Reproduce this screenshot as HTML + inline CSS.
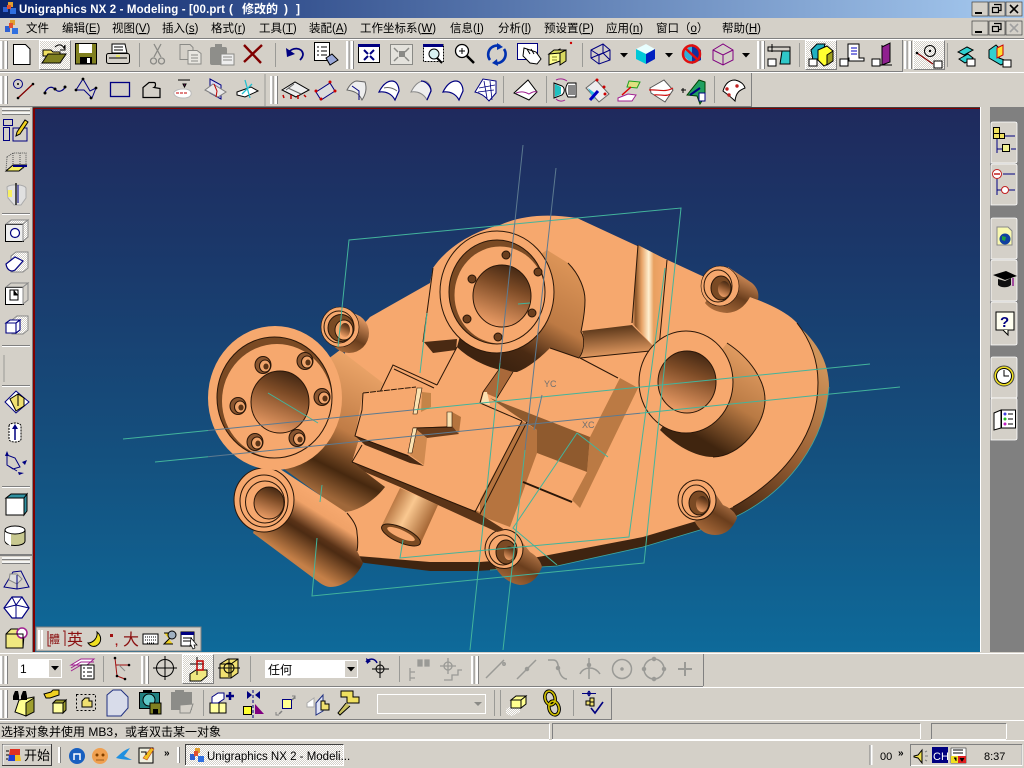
<!DOCTYPE html>
<html><head><meta charset="utf-8"><title>Unigraphics NX 2</title>
<style>
html,body{margin:0;padding:0;background:#d4d0c8;overflow:hidden}
svg{display:block}
text{font-family:"Liberation Sans","WenQuanYi Zen Hei","Noto Sans CJK SC",sans-serif;font-size:12px;fill:#000}
.m text{font-size:11.5px}
.e{fill:#f6a86e}
.o{fill:none;stroke:#2a1608;stroke-width:1}
.g{fill:none;stroke:#43b49c;stroke-width:1}
.b{fill:none;stroke:#5d7a90;stroke-width:1}
</style></head><body>
<svg width="1024" height="768" viewBox="0 0 1024 768" xmlns="http://www.w3.org/2000/svg">
<defs>
<linearGradient id="ti" x1="0" x2="1" y1="0" y2="0"><stop offset="0" stop-color="#0a246a"/><stop offset="1" stop-color="#a6caf0"/></linearGradient>
<linearGradient id="bg" x1="0" x2="0" y1="0" y2="1"><stop offset="0" stop-color="#1f2a5d"/><stop offset=".3" stop-color="#1a3a6c"/><stop offset=".65" stop-color="#14517f"/><stop offset="1" stop-color="#0e6a9a"/></linearGradient>
<pattern id="di" width="2" height="2" patternUnits="userSpaceOnUse"><rect width="2" height="2" fill="#d4d0c8"/><rect width="1" height="1" fill="#fff"/><rect x="1" y="1" width="1" height="1" fill="#fff"/></pattern>
<linearGradient id="hole" x1=".7" y1="0" x2=".35" y2="1"><stop offset="0" stop-color="#3f2512"/><stop offset=".35" stop-color="#7d4b26"/><stop offset="1" stop-color="#f0a068"/></linearGradient>
<linearGradient id="shell" gradientUnits="userSpaceOnUse" x1="830" y1="370" x2="730" y2="520"><stop offset="0" stop-color="#d0945a"/><stop offset=".5" stop-color="#9a6034"/><stop offset="1" stop-color="#3f2410"/></linearGradient>
<linearGradient id="cylA" gradientUnits="userSpaceOnUse" x1="375" y1="370" x2="315" y2="490"><stop offset="0" stop-color="#eba468"/><stop offset=".5" stop-color="#c07c46"/><stop offset=".8" stop-color="#46280f"/><stop offset="1" stop-color="#a0683a"/></linearGradient>
<linearGradient id="cylB" gradientUnits="userSpaceOnUse" x1="320" y1="498" x2="285" y2="554"><stop offset="0" stop-color="#f6a86e"/><stop offset=".2" stop-color="#f0a268"/><stop offset=".5" stop-color="#5a3318"/><stop offset=".58" stop-color="#4c2b13"/><stop offset="1" stop-color="#c58048"/></linearGradient>
<linearGradient id="cylR" gradientUnits="userSpaceOnUse" x1="745" y1="350" x2="685" y2="450"><stop offset="0" stop-color="#e39d62"/><stop offset=".45" stop-color="#b97a44"/><stop offset=".85" stop-color="#40250f"/><stop offset="1" stop-color="#40250f"/></linearGradient>
<linearGradient id="cylT" gradientUnits="userSpaceOnUse" x1="575" y1="265" x2="515" y2="372"><stop offset="0" stop-color="#dd9558"/><stop offset=".5" stop-color="#bd7a44"/><stop offset=".82" stop-color="#4a2a13"/><stop offset="1" stop-color="#3d2310"/></linearGradient>
<linearGradient id="blend" x1="0" x2="1" y1="0" y2="0"><stop offset="0" stop-color="#f6a86e"/><stop offset=".1" stop-color="#8a5428"/><stop offset=".28" stop-color="#e8a468"/><stop offset=".48" stop-color="#fff0d0"/><stop offset=".62" stop-color="#e8a060"/><stop offset="1" stop-color="#f6a86e"/></linearGradient>
<linearGradient id="notch" x1="0" x2=".2" y1="0" y2="1"><stop offset="0" stop-color="#46280f"/><stop offset="1" stop-color="#e59c62"/></linearGradient>
<linearGradient id="stub" gradientUnits="userSpaceOnUse" x1="390" y1="505" x2="428" y2="525"><stop offset="0" stop-color="#b5733f"/><stop offset=".45" stop-color="#fac890"/><stop offset="1" stop-color="#a96a38"/></linearGradient>
<linearGradient id="boss" x1=".8" y1="0" x2=".3" y2="1"><stop offset="0" stop-color="#f6a86e"/><stop offset=".6" stop-color="#6a3e1d"/><stop offset="1" stop-color="#a86a3a"/></linearGradient>
<g id="bolt"><ellipse cx="0" cy="0" rx="8" ry="8.5" fill="#8a5630" stroke="#2a1608"/><ellipse cx="2" cy="1" rx="5.500" ry="6" fill="#f0a56c" stroke="#2a1608"/><ellipse cx="3" cy="1.500" rx="2.600" ry="3" fill="#5b3417"/></g>
<g id="grip"><rect x="0" y="0" width="2.500" height="28" fill="#fff"/><rect x="2.500" y="0" width="1" height="28" fill="#808080"/><rect x="4.500" y="0" width="2.500" height="28" fill="#fff"/><rect x="7" y="0" width="1" height="28" fill="#808080"/></g>
<g id="arw"><path d="M-4 -2h8l-4 4.500z" fill="#000"/></g>
</defs>

<rect width="1024" height="768" fill="#d4d0c8"/>

<!-- title -->
<rect width="1024" height="18" fill="url(#ti)"/>
<g transform="translate(2,2)"><rect x="6" y="0" width="5" height="5" fill="#e0a030"/><rect x="1" y="5" width="5" height="5" fill="#3060d0"/><rect x="8" y="6" width="6" height="6" fill="#3070e0"/><rect x="5" y="3" width="4" height="4" fill="#e05030"/></g>
<text x="19" y="13" textLength="206" lengthAdjust="spacing" style="fill:#fff;font-weight:bold;font-size:11.500px">Unigraphics NX 2 - Modeling - [00.prt</text>
<text x="229" y="13" style="fill:#fff;font-weight:bold;font-size:12px">(</text>
<text x="242" y="13" style="fill:#fff;font-weight:bold;font-size:12px">修改的</text>
<text x="284" y="13" style="fill:#fff;font-weight:bold;font-size:12px">)</text>
<text x="296" y="13" style="fill:#fff;font-weight:bold;font-size:12px">]</text>
<rect x="972" y="2" width="16" height="14" fill="#d4d0c8" stroke="#404040" stroke-width=".7"/><path d="M975 12h7v2h-7z" fill="#000"/>
<rect x="989" y="2" width="16" height="14" fill="#d4d0c8" stroke="#404040" stroke-width=".7"/><path d="M994 4.500h7v6h-2M992.500 7.500h6v5h-6z" fill="none" stroke="#000" stroke-width="1.200"/>
<rect x="1006" y="2" width="16" height="14" fill="#d4d0c8" stroke="#404040" stroke-width=".7"/><path d="M1010 5l8 8M1018 5l-8 8" stroke="#000" stroke-width="1.600"/>
<!-- menu -->
<g transform="translate(4,20)"><rect x="6" y="0" width="5" height="5" fill="#e0a030"/><rect x="1" y="6" width="5" height="6" fill="#3060d0"/><rect x="8" y="8" width="6" height="6" fill="#3070e0"/><rect x="5" y="3" width="4" height="5" fill="#e05030"/></g>
<g class="m">
<text x="26" y="32">文件</text><text x="62" y="32">编辑(<tspan text-decoration="underline">E</tspan>)</text><text x="112" y="32">视图(<tspan text-decoration="underline">V</tspan>)</text><text x="162" y="32">插入(<tspan text-decoration="underline">s</tspan>)</text><text x="211" y="32">格式(<tspan text-decoration="underline">r</tspan>)</text><text x="259" y="32">工具(<tspan text-decoration="underline">T</tspan>)</text><text x="309" y="32">装配(<tspan text-decoration="underline">A</tspan>)</text><text x="360" y="32">工作坐标系(<tspan text-decoration="underline">W</tspan>)</text><text x="450" y="32">信息(<tspan text-decoration="underline">I</tspan>)</text><text x="498" y="32">分析(<tspan text-decoration="underline">l</tspan>)</text><text x="544" y="32">预设置(<tspan text-decoration="underline">P</tspan>)</text><text x="606" y="32">应用(<tspan text-decoration="underline">n</tspan>)</text><text x="656" y="32">窗口（<tspan text-decoration="underline">o</tspan>）</text><text x="722" y="32">帮助(<tspan text-decoration="underline">H</tspan>)</text>
</g>
<rect x="972" y="21" width="16" height="14" fill="#d4d0c8" stroke="#404040" stroke-width=".7"/><path d="M975 31h7v2h-7z"/>
<rect x="989" y="21" width="16" height="14" fill="#d4d0c8" stroke="#404040" stroke-width=".7"/><path d="M994 23.500h7v6h-2M992.500 26.500h6v5h-6z" fill="none" stroke="#000" stroke-width="1.200"/>
<rect x="1006" y="21" width="16" height="14" fill="#d4d0c8" stroke="#404040" stroke-width=".7"/><path d="M1010 24l8 8M1018 24l-8 8" stroke="#a0a0a0" stroke-width="1.600"/>

<!-- row lines -->
<path d="M0 38.500H1024" stroke="#808080"/><path d="M0 39.500H1024" stroke="#fff"/>
<path d="M0 71.500H903" stroke="#808080"/><path d="M0 72.500H1024" stroke="#fff"/>
<path d="M902.500 40V71" stroke="#808080"/>
<path d="M0 106.500H751" stroke="#808080"/>
<path d="M751.500 73V107" stroke="#808080"/>

<use href="#grip" x="0" y="41"/><use href="#grip" x="346" y="41"/><use href="#grip" x="757" y="41"/><use href="#grip" x="904" y="41"/>
<use href="#grip" x="0" y="76"/><use href="#grip" x="270" y="76"/>
<path d="M139.500 43V67M275.500 43V67M582.500 43V67M799.500 43V67M947.500 43V67M265 74V106M546.500 76V103M503.500 76V103M714.500 76V103" stroke="#9a9a96" stroke-width="1"/>

<g stroke="#fff"><rect x="39.500" y="40.500" width="31" height="29" fill="url(#di)"/><rect x="805.500" y="40.500" width="31" height="29" fill="url(#di)"/><rect x="913.500" y="40.500" width="31" height="29" fill="url(#di)"/></g>
<path d="M39.500 69.500H70.500V40.500M805.500 69.500H836.500V40.500M913.500 69.500H944.500V40.500" stroke="#808080" fill="none"/>

<!-- row 1 icons -->
<path d="M13.500 44.500h12l4.500 4.500v15.500H13.500z" fill="#fff" stroke="#000"/>
<path d="M43 50h8l2 2h7v4H43z" fill="#f0e060" stroke="#000"/><path d="M42 63l6-9h18l-6 9z" fill="#808020" stroke="#000"/><path d="M55 47c3-3 7-3 9 1l1-3v5h-5" fill="none" stroke="#000"/>
<rect x="75.500" y="43.500" width="21" height="20.500" fill="#808020" stroke="#000"/><rect x="79" y="44" width="13" height="9" fill="#fff"/><rect x="80" y="57" width="12" height="7" fill="#000"/><rect x="87" y="58" width="3" height="5" fill="#fff"/>
<path d="M112 44h13l2 9h-15z" fill="#fff" stroke="#000"/><path d="M114 47h9M114 50h9" stroke="#000"/><rect x="106.500" y="53.500" width="23" height="10" rx="2" fill="#d4d0c8" stroke="#000"/><path d="M109 58h18" stroke="#000"/><path d="M116 56h4" stroke="#ff0"/>
<g fill="none" stroke="#8a8a86" stroke-width="1.300"><path d="M154 44l7 13M161 44l-7 13"/><circle cx="153.500" cy="61" r="3"/><circle cx="161.500" cy="61" r="3"/></g>
<g stroke="#8a8a86" fill="#d4d0c8"><path d="M180 44.500h10l3 3v12h-13z"/><path d="M188 50.500h9l4 3v10.500h-13z" fill="#e8e6e0"/><path d="M191 55h7M191 58h7M191 61h7"/></g>
<rect x="210" y="47" width="17" height="18" rx="2" fill="#8e8e8a"/><rect x="215" y="44" width="7" height="5" fill="#8e8e8a"/><rect x="221" y="54" width="13" height="11" fill="#eee" stroke="#8a8a86"/><path d="M223 57h9M223 60h9" stroke="#8a8a86"/>
<path d="M244 45l17 18M262 45l-18 17" stroke="#800000" stroke-width="2.400" fill="none"/>
<path d="M288 53c4-6 14-6 15 1 0 3-2 5-3 6" fill="none" stroke="#000080" stroke-width="1.800"/><path d="M286 48l1 9 8-3z" fill="#000080"/>
<rect x="314.500" y="42.500" width="15" height="18" fill="#fff" stroke="#000"/><path d="M317 47h2M321 47h6M317 51h2M321 51h6M317 55h2M321 55h6" stroke="#000"/><path d="M326 58l6-4 6 6-8 5z" fill="#9aa8d8" stroke="#000"/>
<rect x="358.500" y="44.500" width="21" height="18" fill="#fff" stroke="#000"/><rect x="358" y="44" width="22" height="3" fill="#000080"/><path d="M364 50l4 4M374 50l-4 4M364 60l4-4M374 60l-4-4" stroke="#000080" stroke-width="2"/>
<rect x="390.500" y="44.500" width="22" height="20" fill="#e4e2dc" stroke="#8a8a86"/><path d="M394 48l4 4M409 48l-4 4M394 61l4-4M409 61l-4-4" stroke="#8a8a86" stroke-width="1.500"/><rect x="399" y="51" width="6" height="6" fill="#8a8a86"/>
<rect x="423.500" y="44.500" width="20" height="17" fill="#fff" stroke="#000" stroke-dasharray="2 1"/><rect x="423" y="44" width="20" height="3" fill="#000080"/><circle cx="434" cy="54" r="5" fill="#d8f0f0" stroke="#000"/><path d="M437 58l5 5" stroke="#000" stroke-width="2"/>
<circle cx="462" cy="51" r="6.500" fill="#fff" stroke="#000" stroke-width="1.300"/><path d="M459 51h6M462 48v6" stroke="#000"/><path d="M467 56l7 7" stroke="#000" stroke-width="2.500"/>
<path d="M490 60a9 9 0 0 1 10-14M504 49a9 9 0 0 1-9 14" fill="none" stroke="#0030b0" stroke-width="2.600"/><path d="M497 43l6 4-6 3zM498 66l-6-3 5-4z" fill="#0030b0"/>
<rect x="517.500" y="43.500" width="20" height="16" fill="#fff" stroke="#000080"/><path d="M524 48l12 4 5 7-4 5-7-1-7-7z" fill="#fff" stroke="#000"/><path d="M527 49l3 5M531 49l3 5" stroke="#000"/>
<path d="M549 54l11-5v12l-11 4z" fill="#ffff90" stroke="#000"/><path d="M549 54l5-4h12l-6 3zM560 53l6-3v11l-6 4z" fill="#d8d860" stroke="#000"/><path d="M552 57h5M552 60h5" stroke="#808020"/><circle cx="571" cy="43" r="1.200" fill="#c00"/>
<g fill="none" stroke="#000080" stroke-width="1"><path d="M591 50l12-6 7 6v10l-11 4-8-6z"/><path d="M591 50l8 5 11-5M599 55v9M603 44v9l-12 5M603 53l7 7"/></g><use href="#arw" x="624" y="55"/>
<path d="M636 49l10-5 9 5-9 5z" fill="#e8ffff"/><path d="M636 49l10 5v10l-10-5z" fill="#00c8d8"/><path d="M646 54l9-5v10l-9 5z" fill="#0020c0"/><use href="#arw" x="669" y="55"/>
<path d="M682 54l10-10 9 6v10l-9 4z" fill="#30b0d8"/><path d="M692 44v20l9-4v-10z" fill="#1030a0"/><circle cx="691.500" cy="54" r="8.500" fill="none" stroke="#e01010" stroke-width="2.500"/><path d="M685 48l13 12" stroke="#e01010" stroke-width="2.500"/>
<g fill="none" stroke="#800080" stroke-width="1"><path d="M713 50l10-6 10 6v10l-10 5-10-5z"/><path d="M713 50l10 5 10-5M723 55v10"/></g><use href="#arw" x="746" y="55"/>
<path d="M782 51h8v13h-10z" fill="#30c8c8" stroke="#000"/><path d="M768 47h22v4h-22zM772 44v8" fill="#d4d0c8" stroke="#000"/><rect x="768" y="59" width="8" height="7" fill="#fff" stroke="#000"/>
<path d="M811 50l6-6h8l-4 16h-8z" fill="#20b0c0" stroke="#000"/><path d="M818 50l9-4 6 5v10l-9 5-6-6z" fill="#ffff30" stroke="#000"/><path d="M827 55l6-4v10l-6 4z" fill="#a0a020" stroke="#000"/><rect x="809" y="59" width="8" height="7" fill="#fff" stroke="#000"/>
<path d="M848 44h11v14h5v3h-15v-3h-1z" fill="#fff" stroke="#000"/><path d="M851 48h6M851 51h6M851 54h6" stroke="#0000c0"/><rect x="840" y="59" width="8" height="7" fill="#fff" stroke="#000"/>
<path d="M882 47l8-4v19l-8 3z" fill="#902090" stroke="#000"/><path d="M882 45v15M877 65h15" stroke="#000"/><rect x="872" y="59" width="8" height="7" fill="#fff" stroke="#000"/>
<circle cx="930" cy="51" r="5.500" fill="none" stroke="#000"/><circle cx="930" cy="51" r="1.200"/><path d="M917 53l16 11" stroke="#800000" stroke-width="1.200"/><circle cx="917" cy="53" r="1.300"/><rect x="934" y="61" width="8" height="7" fill="#fff" stroke="#000"/>
<path d="M958 52l9-5 6 3-9 5zM959 59l9-5 5 4-8 5z" fill="#30d0d0" stroke="#000"/><rect x="967" y="59" width="8" height="7" fill="#fff" stroke="#000"/>
<path d="M989 50l7-5 3 3v10l8 3-6 4-12-7z" fill="#30d0d0" stroke="#000"/><path d="M997 48l6-3v10l-6 3z" fill="#ffe030" stroke="#c00"/><rect x="1003" y="60" width="8" height="7" fill="#fff" stroke="#000"/>

<!-- row 2 icons -->
<circle cx="18" cy="84" r="4.500" fill="none" stroke="#000080"/><circle cx="18" cy="84" r="1"/><path d="M18 98l15-14" stroke="#800000" stroke-width="1.300"/><circle cx="18" cy="98" r="1.300"/><circle cx="33" cy="84" r="1.300"/>
<path d="M45 92c4-7 8-5 11-2s8 0 9-3" fill="none" stroke="#000080" stroke-width="1.200"/><circle cx="45" cy="93" r="1.500"/><circle cx="55" cy="89" r="1.500"/><circle cx="65" cy="87" r="1.500"/>
<path d="M76 90l7-11 7 12 6-3M76 90l8 0 8 8 4-10" fill="none" stroke="#000080"/><circle cx="76" cy="90" r="1.400"/><circle cx="83" cy="79" r="1.400"/><circle cx="91" cy="98" r="1.400"/><circle cx="96" cy="88" r="1.400"/>
<rect x="110.500" y="82.500" width="19" height="14" fill="none" stroke="#000080" stroke-width="1.300"/>
<path d="M143 97.500v-10l6-5h5c2 0 2 4 0 5l6 1v9z" fill="none" stroke="#000" stroke-width="1.200"/>
<path d="M178 80h12M183 84h3l-1.500 3z" stroke="#000" fill="#a02080"/><path d="M174 92c4-4 15-4 17 0 1 4-2 6-8 6s-10-3-9-6z" fill="#fff" stroke="#bbb"/><path d="M176 93h12" stroke="#c00000" stroke-dasharray="3 1"/>
<path d="M210 79l11 6v14l-11-6z" fill="#d8d8f0" stroke="#000080"/><path d="M205 90l8-6 13 8-8 5z" fill="#e8e8e8" stroke="#808080"/><path d="M214 84l3 7-1 6" stroke="#c00000" fill="none"/>
<path d="M237 92l14-5 7 4-13 6-8-2z" fill="#fff" stroke="#000"/><path d="M245 80l5 18M252 84l-10 10" stroke="#20c0d0" stroke-width="1.300"/>

<path d="M282 90l13-8 14 8-13 7z" fill="#eee" stroke="#000"/><path d="M288 88l13 6M294 84l-8 6" stroke="#666"/><path d="M284 98l-1-3M291 99v-4M298 99v-4M304 95l2 2" stroke="#c00000" stroke-width="1.500"/>
<path d="M316 92l14-9 5 8-14 9z" fill="#ddd" stroke="#000080"/><circle cx="316" cy="91" r="1.500" fill="#c00"/><circle cx="330" cy="82" r="1.500" fill="#c00"/><circle cx="335" cy="91" r="1.500" fill="#c00"/><circle cx="321" cy="99" r="1.500" fill="#c00"/>
<path d="M347 90c3-6 7-9 10-9l8 1c2 6 1 12-3 18-3-7-8-9-15-10z" fill="#eee" stroke="#666"/><path d="M352 86l7 5 0 9" stroke="#000080" fill="none"/>
<path d="M379 92c3-6 7-11 13-11 5 0 7 6 7 10l-4 9c-3-6-9-9-16-8z" fill="#fff" stroke="#000080" stroke-width="1.200"/><path d="M384 88c4-1 9 0 13 3" stroke="#666" fill="none"/>
<path d="M411 92c3-6 7-11 13-11 5 0 7 6 7 10l-4 9c-3-6-9-9-16-8z" fill="#eee" stroke="#888"/><path d="M421 81c5 0 10 5 10 10l-4 9" fill="none" stroke="#000080" stroke-width="1.300"/>
<path d="M443 92c3-6 7-11 13-11 5 0 7 6 7 10l-4 9c-3-6-9-9-16-8z" fill="#fff" stroke="#000080" stroke-width="1.200"/>
<path d="M475 92l8-13 13 2 0 12-7 8c-4-5-9-8-14-9z" fill="#fff" stroke="#000080"/><path d="M479 88l16-3M478 92l16-2M484 81l3 17M490 81l2 19" stroke="#000080" stroke-width=".8"/>
<path d="M514 93l14-13 9 12-8 8z" fill="#fff" stroke="#000"/><path d="M516 93c6-2 9-1 13 1 3-2 6-3 8-2" fill="none" stroke="#a02090"/>
<path d="M554 83l8 3c3 2 3 6 0 9l-8 3zM576 83h-8c-3 4-3 9 0 14h8z" fill="#fff" stroke="#000"/><path d="M555 84l6 3v7l-6 3z" fill="#20c0c0"/><path d="M568 85h8v10h-8z" fill="#888"/><path d="M556 80c4-2 8-1 11 1M565 100c-3 2-7 1-9-1" stroke="#a02090" fill="none"/>
<path d="M586 88l10-8 13 14-10 8z" fill="#eee" stroke="#666"/><path d="M588 88l8 6-2 6z" fill="#30c0e0"/><path d="M590 100l8-9" stroke="#0000c0" stroke-width="3"/><circle cx="597" cy="80" r="1.500" fill="#c00"/><circle cx="604" cy="87" r="1.500" fill="#c00"/><circle cx="605" cy="94" r="1.500" fill="#c00"/>
<path d="M618 98l10-4 8 1-4 6-14 0z" fill="#fff" stroke="#a02090"/><path d="M629 81l11 1-3 6-10-1z" fill="#e0e080" stroke="#20a020"/><path d="M622 95l9-8" stroke="#e00000" stroke-width="1.500"/>
<path d="M650 88l14-8 9 10-8 12-14-9z" fill="#fff" stroke="#555"/><path d="M649 90c8-1 16 3 24-2M654 95c5-1 13 2 16-1" stroke="#d01010" fill="none" stroke-width="1.200"/>
<path d="M681 90h5M683 88v5" stroke="#000"/><path d="M687 95l12-15 6 2v14l-5 8-3-8z" fill="#20a060" stroke="#004000"/><path d="M690 95l10-7" stroke="#000080" stroke-width="2"/><rect x="699" y="93" width="6" height="8" fill="#fff" stroke="#000080"/>
<path d="M723 91c2-7 6-11 12-11 5 1 9 4 10 8-5 2-9 4-10 13-4-4-8-7-12-10z" fill="#fff" stroke="#000"/><circle cx="727" cy="89" r="1.700" fill="#c02020"/><circle cx="737" cy="86" r="1.700" fill="#c02020"/><circle cx="729" cy="95" r="1.700" fill="#c02020"/>

<!-- viewport -->
<rect x="33" y="107" width="957" height="547" fill="#800000"/>
<rect x="35" y="109" width="945" height="543" fill="url(#bg)"/>
<rect x="33" y="107" width="957" height="1" fill="#404040"/>

<!-- MODEL -->
<path d="M357 556Q358 562 365 563L430 571L477 571L557 566L643 547L700 530L737 516C790 490 825 440 829 387C829 360 815 335 783 315L750 297L700 400Z" fill="url(#shell)"/>
<path d="M829 387C825 440 790 490 737 516L700 530L643 547L557 566L490 570" fill="none" stroke="#3fa8a0" stroke-width=".8"/>
<path class="e" d="M370 317L430 283L433 268C445 250 470 232 500 225C520 216 545 213 577 218L700 275L750 297C775 306 790 315 797 323C812 342 818 362 818 383C818 430 790 475 733 507L700 520L643 537L533 558L480 562L430 562L357 556L357 533L345 510L385 487L345 460L345 345Z"/>
<path d="M797 323C812 342 818 362 818 383C818 430 790 475 733 507" class="o"/>
<!-- big left cylinder -->
<path d="M340 350L383 383L360 436L352 462L385 487C375 500 358 512 343 512L280 466L300 380Z" fill="url(#cylA)"/>
<!-- lower-left tube -->
<path d="M277 467L347 513C353 520 357 526 357 533C358 540 358 546 357 551L363 563C358 575 345 587 330 587C327 587 323 585 320 583L253 533Z" fill="url(#cylB)"/>
<path d="M347 513C353 520 357 526 357 533C358 540 358 546 357 551" class="o"/>
<ellipse cx="264" cy="500" rx="30" ry="32" class="e"/>
<ellipse cx="264" cy="500" rx="30" ry="32" class="o"/>
<ellipse cx="264" cy="501" rx="24" ry="26" class="o"/>
<ellipse cx="265" cy="502" rx="19.500" ry="21" class="o"/>
<ellipse cx="269" cy="503" rx="15" ry="16" fill="url(#hole)" stroke="#2a1608"/>

<!-- top boss side -->
<path d="M547 250L568 263C580 275 585 290 585 300C585 315 582 325 581 332C585 338 585 350 579 358L550 348C540 358 528 368 517 372C495 372 470 360 457 347L470 300Z" fill="url(#cylT)"/>
<path d="M568 263C580 275 585 290 585 300C585 315 582 325 581 332C585 338 585 350 579 358L550 348" class="o"/>
<path d="M582 331L632 325L657 350L580 358C585 350 585 338 582 331Z" fill="url(#notch)"/>
<path d="M580 358L660 350" class="o"/>
<path d="M638 245L667 260L657 350L632 323Z" fill="url(#blend)"/>
<path d="M638 245L632 323M667 260L659 348" class="o"/>
<path d="M433 268L423 342" class="o"/>
<path d="M424 342L457 339L456 350L433 353Z" fill="#4a2a13"/>
<path d="M457 347L437 385" class="o"/>
<!-- top boss face -->
<ellipse cx="497" cy="292" rx="57" ry="61" class="e"/>
<ellipse cx="497" cy="292" rx="57" ry="61" class="o"/>
<ellipse cx="497" cy="292" rx="48" ry="52" fill="#7a4a24"/>
<ellipse cx="500" cy="295" rx="45.500" ry="48.500" class="e"/>
<ellipse cx="497" cy="292" rx="48" ry="52" class="o"/>
<ellipse cx="502" cy="296" rx="29" ry="31" fill="url(#hole)" stroke="#2a1608"/>
<g fill="#6b3f1e" stroke="#2a1608"><circle cx="506" cy="255" r="4"/><circle cx="472" cy="279" r="4"/><circle cx="467" cy="319" r="4"/><circle cx="498" cy="337" r="4"/><circle cx="538" cy="272" r="4"/><circle cx="532" cy="313" r="4"/></g>

<!-- left boss -->
<ellipse cx="275" cy="398" rx="67" ry="72" class="e"/>
<ellipse cx="274.500" cy="397.500" rx="57.500" ry="60.500" fill="#7a4a24"/>
<ellipse cx="277" cy="401" rx="55" ry="57" class="e"/>
<ellipse cx="274.500" cy="397.500" rx="57.500" ry="60.500" class="o"/>
<ellipse cx="280" cy="402" rx="29" ry="31" fill="url(#hole)" stroke="#2a1608"/>
<use href="#bolt" x="263" y="365"/><use href="#bolt" x="305" y="361"/><use href="#bolt" x="322" y="397"/><use href="#bolt" x="297" y="438"/><use href="#bolt" x="255" y="442"/><use href="#bolt" x="238" y="406"/>

<!-- right boss -->
<path d="M727 343C750 358 765 380 765 400C765 425 740 457 713 457C695 457 675 445 660 430Z" fill="url(#cylR)"/>
<path d="M727 343C750 358 765 380 765 400C765 425 740 457 713 457" class="o"/>
<ellipse cx="686" cy="382" rx="47" ry="51" class="e"/>
<ellipse cx="686" cy="382" rx="47" ry="51" class="o"/>
<ellipse cx="687" cy="382" rx="29" ry="31" fill="url(#hole)" stroke="#2a1608"/>

<!-- small bosses -->
<ellipse cx="349" cy="333" rx="20" ry="20" fill="url(#boss)"/>
<ellipse cx="340" cy="327" rx="19" ry="20" class="e"/><ellipse cx="340" cy="327" rx="19" ry="20" class="o" style="stroke-width:.6"/><ellipse cx="339" cy="327" rx="15" ry="16" class="o"/><ellipse cx="341" cy="328" rx="13" ry="13.500" fill="#7a4a24" stroke="#2a1608"/><ellipse cx="344" cy="330" rx="9" ry="10" class="e" stroke="#2a1608"/><ellipse cx="345" cy="330" rx="5" ry="7" fill="url(#hole)"/>
<path d="M728 267L752 283Q760 290 758 300L750 297Q742 312 727 313Q712 312 705 303Z" fill="url(#boss)"/>
<ellipse cx="720" cy="286" rx="19" ry="20" class="e"/><ellipse cx="720" cy="286" rx="19" ry="20" class="o" style="stroke-width:.6"/><ellipse cx="718" cy="286" rx="14" ry="16" class="o"/><ellipse cx="721" cy="288" rx="10" ry="12" fill="#7a4a24" stroke="#2a1608"/><ellipse cx="724" cy="289" rx="6" ry="8" fill="url(#hole)"/>
<path d="M708 483L723 505Q735 510 737 518Q730 535 715 535Q702 535 695 522Z" fill="url(#boss)"/>
<ellipse cx="697" cy="500" rx="19" ry="20" class="e"/><ellipse cx="697" cy="500" rx="19" ry="20" class="o"/><ellipse cx="696" cy="501" rx="14" ry="16" class="o"/><ellipse cx="699" cy="503" rx="10" ry="12" fill="#7a4a24" stroke="#2a1608"/><ellipse cx="702" cy="504" rx="6" ry="8" fill="url(#hole)"/>
<path d="M515 533L530 552Q540 558 542 567Q535 585 520 585Q505 583 495 567Z" fill="url(#boss)"/>
<ellipse cx="504" cy="549" rx="19" ry="19.500" class="e"/><ellipse cx="504" cy="549" rx="19" ry="19.500" class="o"/><ellipse cx="503" cy="550" rx="14" ry="15" class="o"/><ellipse cx="506" cy="552" rx="10" ry="12" fill="#7a4a24" stroke="#2a1608"/><ellipse cx="509" cy="553" rx="5" ry="7" fill="url(#hole)"/>

<!-- pocket -->
<path d="M620 378L638 388L580 508L572 500L587 472L590 437Z" fill="#bb7a44"/>
<path d="M490 398L590 437L587 472L537 453L537 430Z" fill="#8f5a2e"/>
<path d="M537 430L537 453L510 527L473 513L522 421Z" fill="#b6743f"/>
<path d="M500 368L513 372L497 398L483 392Z" fill="#a9693a"/>
<path d="M523 482L572 502" stroke="#2a1608" stroke-width="2"/>
<path d="M580 358L618 378" class="o"/>
<path d="M513 372L497 398M500 368L483 392" class="o" style="stroke-width:.8"/>

<!-- plate -->
<path d="M360 436L420 440L480 403L480 512L352 462Z" class="e"/>
<path d="M352 462L475 511L505 530L497 532L438 505L400 487L365 472Z" fill="#5a3418"/>
<path d="M352 462L362 445" class="o"/><path d="M352 462L476 512" class="o"/>
<path d="M522 421L475 512M527 422L480 514" class="o"/>
<path d="M483 392L480 403L522 421" class="o"/>
<path d="M484 392L481 403L490 405L487 392Z" fill="#fbe0b0"/>
<!-- stub -->
<path d="M400 488L438 505L420 545L382 525Z" fill="url(#stub)"/>
<ellipse cx="401" cy="535" rx="21" ry="7.500" transform="rotate(24 401 535)" fill="#7a4a22" stroke="#2a1608"/>
<ellipse cx="401" cy="534" rx="15" ry="4" transform="rotate(24 401 534)" class="e"/>
<!-- block -->
<path d="M380 392L393 365L437 385M394 369L434 388" class="o"/>
<path d="M363 393L422 387L415 413L447 413L452 427L413 428L408 453L355 436Z" class="e"/>
<path d="M422 392L431 393L431 407L421 412Z" fill="#c58448"/>
<path d="M452 412L461 417L459 433L452 427Z" fill="#b5743e"/>
<path d="M413 428L452 426L459 434L427 438Z" fill="#6a3d1c"/>
<path d="M417 430L427 438L424 465L410 455Z" fill="#d08a50"/>
<path d="M355 436L408 455L424 466L410 463L365 445Z" fill="#4a2a13"/>
<path d="M363 393L416 387" stroke="#2a1608" stroke-dasharray="6 1"/>
<path d="M363 393L362 410L355 436L408 456M413 428L452 427" class="o"/>
<path d="M417 388L422 388L417 414L413 414Z" fill="#fce2b0" stroke="#2a1608" stroke-width=".6"/>
<path d="M447 412L452 412L452 427L447 427Z" fill="#fce2b0" stroke="#2a1608" stroke-width=".6"/>
<path d="M413 428L417 428L412 453L408 453Z" fill="#fce2b0" stroke="#2a1608" stroke-width=".6"/>

<!-- WCS lines -->
<g class="g">
<path d="M338 347L349 240L681 208L644 563L312 596L317 538M322 485L320 502"/>
<path d="M403 540L400 558L629 537L665 268M427 313L420 373"/>
<path d="M123 439L208 430.500M415 409.700L870 364M155 462L208 456.700M640 413.200L900 387"/>
<path d="M500 363L470 650M525 450L503 650"/>
<path d="M268 393L318 423M518 304L530 303"/>
<path d="M577 433L513 528L557 565M577 433L608 457"/>
</g>
<g class="b">
<path d="M208 430.500L415 409.700M208 456.700L640 413.200"/>
<path d="M523 145L500 363M556 168L525 450"/>
<path d="M534 430L542 395"/>
</g>
<text x="544" y="387" style="font-size:9px;fill:#707070">YC</text>
<text x="582" y="428" style="font-size:9px;fill:#707070">XC</text>

<!-- language bar -->
<rect x="36" y="627" width="165" height="24" fill="#d4d0c8" stroke="#808080"/>
<path d="M39 630v19M42 630v19" stroke="#fff" stroke-width="2"/>
<text x="49" y="643" style="font-size:11px;fill:#8a1010">體</text><path d="M48 631v15h3M63 631h2v15" fill="none" stroke="#8a1010"/>
<text x="67" y="645" style="font-size:16px;fill:#8a1010">英</text>
<text x="123" y="645" style="font-size:16px;fill:#8a1010">大</text>
<path d="M88 643c5 0 10-5 9-11 5 4 5 11-1 14-3 1-6 0-8-3z" fill="#f0e020" stroke="#000"/>
<rect x="110" y="634" width="3" height="3" fill="#a01010"/><text x="115" y="645" style="font-size:11px;fill:#a01010;font-weight:bold">,</text>
<rect x="143" y="634" width="15" height="10" fill="#fff" stroke="#000"/><path d="M145 637h11M145 640h11M147 643h7" stroke="#000" stroke-dasharray="1 1"/>
<path d="M164 633h6v5l-6 6h9" fill="#f0d020" stroke="#000"/><circle cx="172" cy="635" r="4" fill="#a0b0c0" stroke="#000"/>
<rect x="181" y="632" width="13" height="14" fill="#fff" stroke="#000"/><rect x="181" y="632" width="13" height="3" fill="#000080"/><path d="M183 638h9M183 641h9" stroke="#000"/><path d="M191 638l6 7h-3l1 3-2 1-2-4-1 1z" fill="#fff" stroke="#000" stroke-width=".7"/>

<!-- left toolbar -->
<rect x="0" y="107" width="33" height="547" fill="#d4d0c8"/>
<path d="M32.500 107V653" stroke="#808080"/>
<path d="M2 109h28M2 113h28" stroke="#fff" stroke-width="1.500"/><path d="M2 110.500h28M2 114.500h28" stroke="#808080"/>
<path d="M2 213.500h28M2 345.500h28M2 385.500h28M2 486.500h28" stroke="#808080"/>
<path d="M2 214.500h28M2 346.500h28M2 386.500h28M2 487.500h28" stroke="#fff"/>
<path d="M0 554.500h33M0 555.500h33" stroke="#808080"/><path d="M2 558h28M2 562h28" stroke="#fff" stroke-width="1.500"/><path d="M2 559.500h28M2 563.500h28" stroke="#808080"/>
<path d="M4 355V382" stroke="#9a9a96"/>
<rect x="3.500" y="119.500" width="9" height="6" fill="none" stroke="#000080"/><rect x="3.500" y="127.500" width="6" height="13" fill="none" stroke="#000080"/><path d="M13 128h14v13H13z" fill="none" stroke="#000080"/><path d="M17 132l8-12 3 2-8 12-4 2z" fill="#f0d020" stroke="#000"/>
<g transform="translate(0,152)"><path d="M7 5l6-4h13v13l-7 5H6z" fill="none" stroke="#555" stroke-dasharray="1 1"/><path d="M6 19l7-6h13l-7 6z" fill="#f8f060" stroke="#000"/><path d="M13 1v12M20 1v13" stroke="#555" stroke-dasharray="1 1"/><path d="M13 14h14" stroke="#000080" stroke-width="2"/></g>
<path d="M7 187c3-3 17-3 19 1v10l-5 7h-7l-6-7z" fill="#e0e0e0" stroke="#aaa"/><path d="M8 190l4 0v7H8z" fill="#f8f060"/><path d="M16 183v22" stroke="#000" stroke-width="1.300"/><path d="M18 185v18" stroke="#000080"/>
<rect x="5.500" y="224.500" width="18" height="17" fill="#eee" stroke="#000"/><path d="M6 224l5-4h17l-5 4zM23 224l5-4v17l-5 4z" fill="url(#di)" stroke="#888"/><circle cx="15" cy="233" r="4.500" fill="#fff" stroke="#000080" stroke-width="1.200"/>
<path d="M11 256l5-4h12v16l-5 4H11z" fill="url(#di)" stroke="#888"/><path d="M6 264l9-7 8 4-8 9c-3 2-8 1-9-6z" fill="#fff" stroke="#000080" stroke-width="1.200"/>
<rect x="5.500" y="287.500" width="18" height="17" fill="#fff" stroke="#000"/><path d="M6 287l5-4h17l-5 4zM23 287l5-4v17l-5 4z" fill="#d4d0c8" stroke="#888"/><rect x="10" y="290" width="8" height="10" fill="none" stroke="#000"/><path d="M14 290v5h4" stroke="#000"/>
<path d="M12 320l5-4h11v14l-5 4H12z" fill="url(#di)" stroke="#888"/><path d="M6 323h10v10H6zM6 323l4-3h10l-4 3zM16 323l4-3v10l-4 3z" fill="#fff" stroke="#000080" stroke-width="1.100"/>
<path d="M5 402l11-11 13 11-13 11z" fill="#fff" stroke="#000080"/><path d="M10 399l8-5 6 4v8l-8 5z" fill="#f0e070" stroke="#000"/><path d="M18 394v12" stroke="#000"/>
<path d="M9 426c0-4 12-4 12 0v13c0 4-12 4-12 0z" fill="#fff" stroke="#000" stroke-dasharray="2 1"/><path d="M15 440v-14" stroke="#000080" stroke-width="1.500"/><path d="M12 429l3-5 3 5z" fill="#000080"/>
<g fill="none" stroke="#000080"><path d="M7 458V455l8 3 5 9-7 2-6-4zM7 453v12M7 465l10 6"/></g><path d="M5 456l2-5 2 5zM22 462l5-2-2 5zM18 472l6 1-5 2z" fill="#000080"/>
<path d="M6 498h18v17H6z" fill="#fff" stroke="#000"/><path d="M6 498l5-4h16l-3 4zM24 498l3-4v17l-3 4z" fill="#3090a0" stroke="#000"/>
<path d="M5 530v11c0 6 20 6 20 0v-11" fill="#c8c890" stroke="#000"/><path d="M5 532v9c2 3 6 5 6 5v-12z" fill="#fff"/><ellipse cx="15" cy="530" rx="10" ry="4" fill="#fff" stroke="#000"/>
<path d="M4 587l9-15 8-1 8 16-12 2z" fill="none" stroke="#000080"/><path d="M10 574l7 0 5 5-5 5-8-4z" fill="#ddd" stroke="#888"/><path d="M17 575v14" stroke="#000080"/>
<path d="M4 608l8-11 10 0 7 11-7 10-10 0z" fill="#fff" stroke="#000080" stroke-width="1.200"/><path d="M4 608l12-3 13 3M16 605v13M12 597l4 8 6-8" fill="none" stroke="#000080"/>
<path d="M6 634l5-5h13v6l-1 13H6z" fill="#f0e880" stroke="#000"/><circle cx="22" cy="633" r="5" fill="#fff" stroke="#a02090" stroke-width="1.500"/><path d="M6 634h17v14" fill="none" stroke="#000"/>

<!-- right side panel -->
<rect x="980" y="107" width="10" height="547" fill="#d4d0c8"/>
<rect x="980" y="107" width="1" height="547" fill="#fff"/>
<rect x="990" y="107" width="34" height="547" fill="#808080"/>
<g fill="#d4d0c8" stroke="#fff" stroke-width=".8">
<path d="M991 124q0-2 2-2h22q2 0 2 2v37q0 2-2 2h-24z"/><path d="M991 166q0-2 2-2h22q2 0 2 2v37q0 2-2 2h-24z"/>
<path d="M991 220q0-2 2-2h22q2 0 2 2v37q0 2-2 2h-24z"/><path d="M991 262q0-2 2-2h22q2 0 2 2v37q0 2-2 2h-24z"/><path d="M991 304q0-2 2-2h22q2 0 2 2v39q0 2-2 2h-24z"/>
<path d="M991 359q0-2 2-2h22q2 0 2 2v37q0 2-2 2h-24z"/><path d="M991 400q0-2 2-2h22q2 0 2 2v38q0 2-2 2h-24z"/>
</g>
<g transform="translate(980,105)">
<rect x="13.500" y="22.500" width="6" height="6" fill="#f0e060" stroke="#000"/><rect x="13.500" y="28.500" width="6" height="5" fill="#f0e060" stroke="#000"/><rect x="19.500" y="28.500" width="5" height="5" fill="#f0e060" stroke="#000"/><path d="M17 34V48M17 44h5M25 31h10M31 44h5" stroke="#000080" fill="none"/><rect x="22.500" y="39.500" width="7" height="7" fill="#f0f090" stroke="#000"/>
<circle cx="17" cy="69" r="4.500" fill="#fff" stroke="#c02020"/><path d="M14 69h6" stroke="#c02020" stroke-width="1.500"/><circle cx="25" cy="85" r="3.500" fill="#fff" stroke="#c02020"/><path d="M17 74V90M17 85h4M23 69h12M29 85h6" stroke="#000080" fill="none"/>
<path d="M17 122h11l4 4v14H17z" fill="#f8f8b0" stroke="#888"/><circle cx="25" cy="134" r="5.500" fill="#1040a0"/><path d="M22 131l4 1-1 4-3-1z" fill="#20a040"/>
<path d="M13 170l13-4 11 5-12 4z" fill="#000"/><path d="M18 174v6c3 3 10 3 13 0v-7l-6 3z" fill="#101010"/><path d="M33 173v8" stroke="#902090" stroke-width="1.500"/>
<rect x="16" y="207" width="18" height="18" fill="#fffff0" stroke="#000"/><text x="20" y="222" style="font-size:15px;font-weight:bold;fill:#000080">?</text><path d="M28 225v5l-5-5" fill="#fffff0" stroke="#000"/>
<circle cx="24" cy="271" r="10" fill="#f0e020" stroke="#444"/><circle cx="24" cy="271" r="7.500" fill="#fff" stroke="#000"/><path d="M24 265v6h5" stroke="#000" fill="none"/>
<path d="M14 308l7-3v18l-7 2z" fill="#fff" stroke="#000"/><rect x="21.500" y="305" width="14" height="18" fill="#fff" stroke="#000"/><circle cx="25" cy="309" r="1.500" fill="#4040e0"/><circle cx="25" cy="314" r="1.500" fill="#20c020"/><circle cx="25" cy="319" r="1.500" fill="#c020c0"/><path d="M28 309h5M28 314h5M28 319h5" stroke="#000"/>
</g>

<!-- row 3 / row 4 -->
<rect x="0" y="652" width="1024" height="70" fill="#d4d0c8"/>
<path d="M0 653.500H1024" stroke="#fff"/>
<path d="M0 686.500H703M703.500 654V686" stroke="#808080"/><path d="M0 687.500H1024" stroke="#fff"/>
<path d="M0 719.500H611M611.500 688V720" stroke="#808080"/>
<use href="#grip" x="0" y="656"/><use href="#grip" x="141" y="656"/><use href="#grip" x="471" y="656"/><use href="#grip" x="0" y="690"/>
<path d="M103.500 656V682M250.500 656V682M399.500 656V682M203.500 690V716M494.500 690V716M500.500 690V716M573.500 690V716" stroke="#9a9a96"/>
<rect x="18" y="659" width="44" height="19" fill="#fff"/><rect x="49" y="660" width="12" height="17" fill="#d4d0c8"/><use href="#arw" x="55" y="668"/>
<text x="20" y="673" style="font-size:12px">1</text>
<path d="M71 665l10-6 13 0-7 6z" fill="#fff" stroke="#a02090"/><path d="M71 668l10-6h13M71 671l10-6h13" fill="none" stroke="#a02090"/><rect x="81" y="665" width="13" height="14" fill="#fff" stroke="#000"/><path d="M83 668h2M87 668h5M83 672h2M87 672h5M83 676h2M87 676h5" stroke="#000"/>
<path d="M115 658l2 18 8 3M116 665l13 0" fill="none" stroke="#a01010"/><circle cx="115" cy="658" r="1.300"/><circle cx="129" cy="665" r="1.300"/><circle cx="117" cy="676" r="1.300"/><circle cx="125" cy="679" r="1.300"/><path d="M119 665l6 6" stroke="#888"/>
<circle cx="165" cy="668" r="8.500" fill="none" stroke="#000"/><path d="M165 656v24M153 668h24" stroke="#000"/>
<rect x="182.500" y="654.500" width="31" height="29" fill="url(#di)" stroke="#fff"/><path d="M182.500 683.500h31V654.500" stroke="#808080" fill="none"/>
<path d="M190 674l6-4h11v6l-6 5h-11z" fill="#f0e880" stroke="#000"/><path d="M197 657v18M190 664h14" stroke="#000"/><rect x="197" y="661" width="6" height="9" fill="none" stroke="#c00000" stroke-width="1.500"/>
<path d="M220 664l8-5h10v14l-7 5h-11z" fill="#f0e070" stroke="#000"/><path d="M231 664h-11M231 664v14M231 664l7-5" stroke="#000"/><circle cx="229" cy="668" r="5" fill="none" stroke="#000"/><path d="M229 659v18M218 668h22" stroke="#000"/>
<rect x="265" y="660" width="93" height="18" fill="#fff"/><rect x="345" y="661" width="12" height="16" fill="#d4d0c8"/><use href="#arw" x="351" y="669"/>
<text x="268" y="674">任何</text>
<path d="M366 662c3-4 9-4 11 1" fill="none" stroke="#000080" stroke-width="1.500"/><path d="M366 658l1 6 4-3z" fill="#000080"/><circle cx="380" cy="669" r="4" fill="none" stroke="#000"/><path d="M380 661v17M372 669h17" stroke="#000"/>
<g fill="none" stroke="#9a9a96" stroke-width="1.300"><path d="M410 668v13M410 672h5M410 678h5"/><path d="M418 660h4v6h-4zM425 660h4v6h-4z" fill="#9a9a96"/>
<circle cx="448" cy="666" r="4"/><path d="M448 658v16M440 666h16M444 680h8v-5h6v-5h4"/></g>
<g fill="none" stroke="#9a9a96" stroke-width="1.500">
<path d="M486 678l18-18"/><circle cx="504" cy="664" r="1.200"/>
<path d="M517 679l19-19"/><circle cx="527" cy="669" r="1.500" fill="#9a9a96"/>
<path d="M548 660h5c5 0 5 5 6 10s4 9 8 9"/><circle cx="558" cy="668" r="1.500" fill="#9a9a96"/>
<path d="M580 674c3-7 14-9 20 0M589 658v21"/><circle cx="589" cy="665" r="1.500" fill="#9a9a96"/>
<circle cx="622" cy="669" r="9.500"/><circle cx="622" cy="669" r="1" fill="#9a9a96"/>
<circle cx="654" cy="669" r="10"/><circle cx="654" cy="659" r="1.500" fill="#9a9a96"/><circle cx="644" cy="669" r="1.500" fill="#9a9a96"/><circle cx="664" cy="669" r="1.500" fill="#9a9a96"/><circle cx="654" cy="679" r="1.500" fill="#9a9a96"/>
<path d="M678 669h14M685 662v14" stroke-width="2"/>
</g>
<!-- row 4 icons -->
<path d="M19 700l15-3v14l-8 5-11-4z" fill="#ffff90" stroke="#000"/><path d="M26 703v13M26 703l8-5v14l-8 4z" fill="#a0a030" stroke="#000"/><path d="M13 696l2-5h3l1 5v4h-6zM21 696l2-5h3l1 5v4h-6z" fill="#000"/>
<path d="M53 703l10-1v11H53z" fill="#ffffa0" stroke="#000"/><path d="M53 703l3-3h10l-3 3zM63 703l3-3v10l-3 3z" fill="#a0a030" stroke="#000"/><path d="M44 694l7-2 2-2h6v5l-9 3h-4z" fill="#f0d020" stroke="#000"/>
<rect x="76.500" y="694.500" width="19" height="16" fill="none" stroke="#000" stroke-dasharray="2 2"/><path d="M82 701l3-3h4v3h3v6h-10z" fill="#f0e070" stroke="#000"/>
<path d="M107 695l6-5h8l7 7v11l-7 8h-14z" fill="#d8dcea" stroke="#203080"/>
<rect x="139.500" y="692.500" width="20" height="16" fill="#208080" stroke="#000"/><circle cx="149" cy="700" r="6" fill="#60c8c8" stroke="#000"/><rect x="143" y="690" width="9" height="3" fill="#000"/><rect x="150" y="703" width="11" height="11" fill="#808020" stroke="#000"/><rect x="153" y="709" width="5" height="5" fill="#000"/>
<rect x="171" y="692" width="21" height="18" fill="#8c8c88"/><rect x="175" y="690" width="9" height="3" fill="#8c8c88"/><path d="M180 705l13-1-3 9-10 0z" fill="#d4d0c8" stroke="#8c8c88"/>
<path d="M210 703h9v10h-9zM219 703h7v10h-7z" fill="#ffffa0" stroke="#000"/><path d="M212 697l6-4h6v6l-6 4h-6z" fill="#fff" stroke="#000080"/><path d="M226 696h8M230 692v8" stroke="#000080" stroke-width="2.500"/>
<path d="M253 690v28" stroke="#000080" stroke-dasharray="3 2"/><path d="M247 691l5 4-5 4zM260 691l-5 4 5 4z" fill="#000080"/><rect x="243.500" y="706.500" width="8" height="8" fill="#ffff30" stroke="#000"/><path d="M255 704l9 10h-9z" fill="#800080"/>
<rect x="282.500" y="699.500" width="9" height="9" fill="#ffff90" stroke="#000080"/><path d="M279 714l3-3M295 697l-3 3" stroke="#808080" stroke-width="1.500"/><path d="M276 712v3h3M292 696h3v3" fill="none" stroke="#808080"/>
<path d="M307 703l7-5v9h-7z" fill="#fff" stroke="#aaa"/><path d="M316 703l7-8v16l-7 4z" fill="#e0e4f4" stroke="#203080"/><path d="M321 701h4v3h4v6h-8z" fill="#f0e070" stroke="#000"/>
<path d="M347 691h6v6h6v6h-12v-6h-6v-6z" fill="#f0e060" stroke="#000"/><path d="M346 703l-8 10 2 2 10-9" fill="#c8c060" stroke="#000"/>
<rect x="377.500" y="694.500" width="108" height="19" fill="#d4d0c8" stroke="#fff"/><path d="M474 702h8l-4 4z" fill="#8a8a86"/>
<path d="M506 709l8-5 6 0 0 8-8 4-6-2z" fill="url(#di)"/><path d="M511 700h10v8h-10zM511 700l5-4h10l-5 4zM521 700l5-4v8l-5 4z" fill="#ffff90" stroke="#000"/>
<ellipse cx="550" cy="698" rx="5" ry="7" transform="rotate(-15 550 698)" fill="none" stroke="#000" stroke-width="3.500"/><ellipse cx="554" cy="708" rx="5" ry="7" transform="rotate(-15 554 708)" fill="none" stroke="#000" stroke-width="3.500"/><ellipse cx="550" cy="698" rx="5" ry="7" transform="rotate(-15 550 698)" fill="none" stroke="#d0c000" stroke-width="1.600"/><ellipse cx="554" cy="708" rx="5" ry="7" transform="rotate(-15 554 708)" fill="none" stroke="#d0c000" stroke-width="1.600"/>
<path d="M582 693.500h14M588 691l3 2.500-3 2.500M590 691l-3 2.500 3 2.500" stroke="#000080" fill="none"/><rect x="586" y="701" width="4" height="4" fill="#f0e070" stroke="#000"/><rect x="590" y="698" width="4" height="4" fill="#f0e070" stroke="#000"/><rect x="590" y="702" width="4" height="4" fill="#f0e070" stroke="#000"/><path d="M591 708l4 5 8-11" stroke="#000080" stroke-width="1.600" fill="none"/>

<!-- status bar -->
<path d="M0 720.500H1024" stroke="#fff"/>
<path d="M0 723.500H549M552 723.500H920M931 723.500H1006" stroke="#808080"/>
<path d="M0 739.500H549M552 739.500H920M931 739.500H1006" stroke="#fff"/>
<path d="M552.500 724V739M931.500 724V739" stroke="#808080"/><path d="M549.500 724V739M920.500 724V739M1006.500 724V739" stroke="#fff"/>
<text x="1" y="736" style="font-size:12px">选择对象并使用 MB3，或者双击某一对象</text>

<!-- taskbar -->
<path d="M0 740.500H1024" stroke="#fff"/>
<rect x="2.500" y="744.500" width="49" height="21" fill="#d4d0c8" stroke="#404040"/><path d="M3 765V745H51" stroke="#fff" fill="none"/>
<g transform="translate(6,748)"><path d="M4 1h5v6H3zM9 1h5v6H9z" fill="#e03020"/><path d="M3 7h6v6H2z" fill="#2040d0"/><path d="M9 7h5l1 6H9z" fill="#f0c020"/><path d="M0 3h3M0 7h3M0 11h2" stroke="#000"/></g>
<text x="24" y="760" style="font-size:13px">开始</text>
<path d="M59 747V763M178 747V763" stroke="#fff" stroke-width="2"/><path d="M60.500 747V763M179.500 747V763" stroke="#808080"/>
<circle cx="77" cy="756" r="8" fill="#1860c0"/><path d="M74 760v-6h6v6" stroke="#fff" stroke-width="1.500" fill="none"/>
<circle cx="100" cy="756" r="8" fill="#f0a050"/><circle cx="97" cy="755" r="1.500" fill="#804000"/><circle cx="103" cy="755" r="1.500" fill="#804000"/><path d="M96 760h8" stroke="#a06020"/>
<path d="M116 758c4-4 8-8 14-10-3 4-4 6-6 8l8 4c-6 0-12-1-16-2z" fill="#2090e0"/>
<rect x="139" y="748" width="14" height="15" fill="#f0f0e0" stroke="#000"/><path d="M143 758l8-10 3 1-7 11z" fill="#f0c020" stroke="#c04020" stroke-width=".6"/><path d="M141 752h5v3" stroke="#000" fill="none"/>
<text x="164" y="756" style="font-size:10px;font-weight:bold">»</text>
<rect x="185.500" y="744.500" width="158" height="21" fill="url(#di)" stroke="#fff"/><path d="M185.500 765V744.500H343.500" stroke="#404040" fill="none"/>
<g transform="translate(189,748)"><rect x="6" y="0" width="5" height="5" fill="#e0a030"/><rect x="1" y="6" width="5" height="6" fill="#3060d0"/><rect x="9" y="8" width="6" height="6" fill="#3070e0"/><rect x="5" y="3" width="4" height="5" fill="#e05030"/></g>
<text x="207" y="760" style="font-size:11.500px">Unigraphics NX 2 - Modeli...</text>
<path d="M870 745V765" stroke="#808080"/><path d="M871.500 745V765" stroke="#fff" stroke-width="2"/>
<text x="880" y="760" style="font-size:11px">00</text>
<text x="898" y="756" style="font-size:10px;font-weight:bold">»</text>
<rect x="910.500" y="744.500" width="111" height="21" fill="none" stroke="#808080"/><path d="M911 765.500H1022V745" stroke="#fff" fill="none"/>
<path d="M914 756l4-1 4-5v13l-4-5-4-1z" fill="#f0e050" stroke="#000"/><path d="M925 752l2-1M925 756h3M925 760l2 1" stroke="#808080"/>
<rect x="932" y="747" width="16" height="16" fill="#000080"/><text x="933" y="760" style="font-size:11px;fill:#fff">CH</text>
<rect x="951" y="748" width="15" height="15" fill="#fff" stroke="#000" stroke-width=".5"/><rect x="951" y="756" width="7" height="7" fill="#f0e020"/><rect x="958" y="756" width="8" height="7" fill="#e02020"/><path d="M953 750h10M953 753h10M954 758h2v3M960 758l2 3 2-3" stroke="#000"/>
<text x="984" y="760" style="font-size:11px">8:37</text>
</svg>
</body></html>
